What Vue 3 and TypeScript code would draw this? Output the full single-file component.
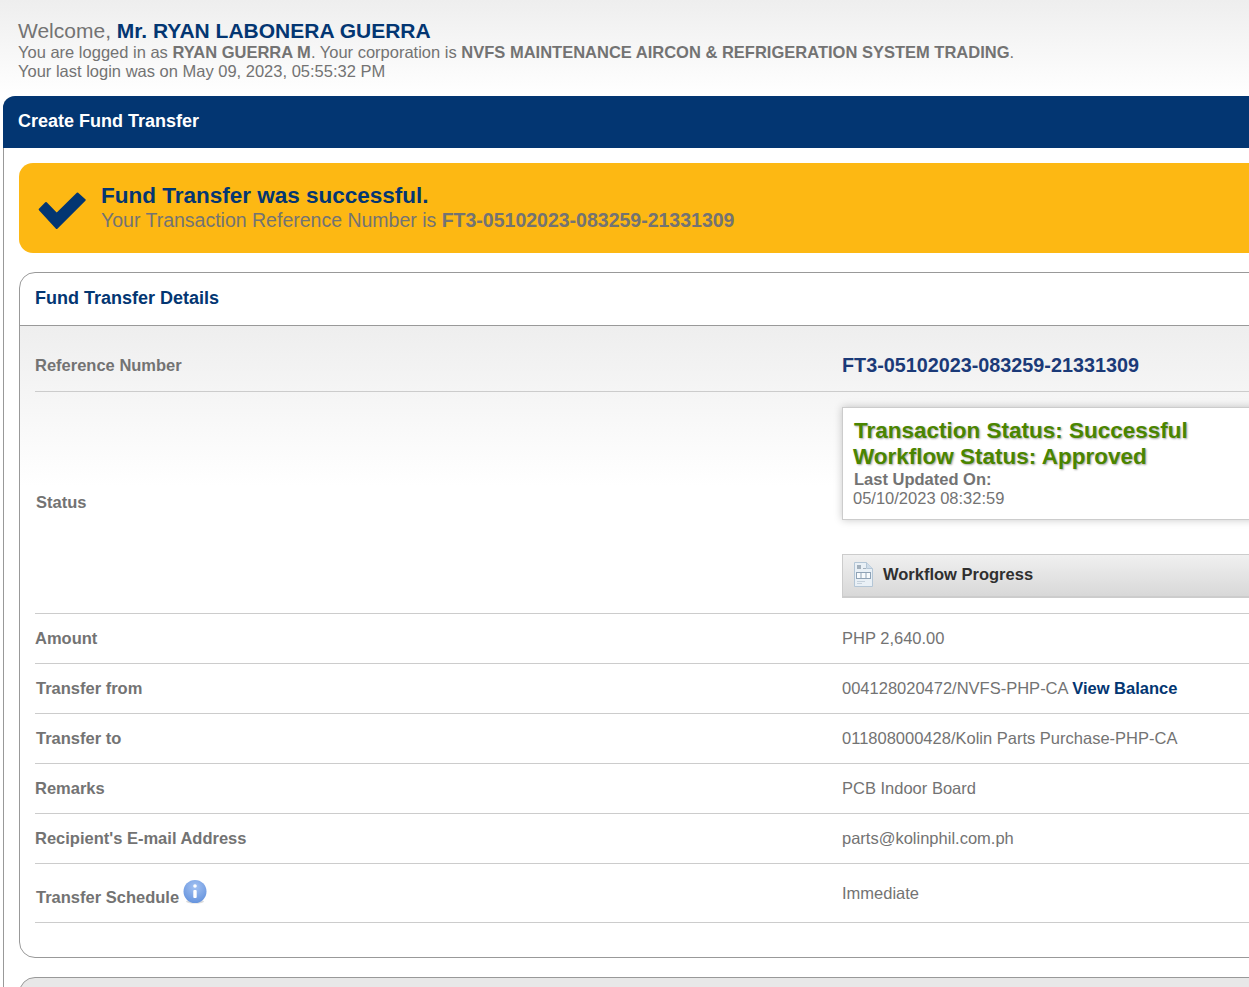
<script setup lang="ts">
interface IRow {
  label: string;
  value: string;
  link?: string;
  indent?: boolean;
}

const rows: IRow[] = [
  { label: "Amount", value: "PHP 2,640.00" },
  { label: "Transfer from", value: "004128020472/NVFS-PHP-CA", link: "View Balance", indent: true },
  { label: "Transfer to", value: "011808000428/Kolin Parts Purchase-PHP-CA", indent: true },
  { label: "Remarks", value: "PCB Indoor Board" },
  { label: "Recipient's E-mail Address", value: "parts@kolinphil.com.ph" },
];
</script>

<template>
  <div class="page">
    <header class="welcome">
      <div class="welcome__hello">Welcome, <b>Mr. RYAN LABONERA GUERRA</b></div>
      <div class="welcome__line">
        You are logged in as <b>RYAN GUERRA M</b>. Your corporation is
        <b>NVFS MAINTENANCE AIRCON &amp; REFRIGERATION SYSTEM TRADING</b>.
      </div>
      <div class="welcome__line">Your last login was on May 09, 2023, 05:55:32 PM</div>
    </header>

    <main class="panel">
      <h1 class="panel__title">Create Fund Transfer</h1>

      <div class="panel__body">
        <section class="banner">
          <svg class="banner__check" width="48" height="40" viewBox="0 0 48 40">
            <path
              d="M1.7 19.5 L18.7 38 L46.7 10 L39.5 3.5 L18.7 24 L8 13 Z"
              fill="#033672"
              stroke="#033672"
              stroke-width="2"
              stroke-linejoin="round"
            />
          </svg>
          <div class="banner__text">
            <div class="banner__title">Fund Transfer was successful.</div>
            <div class="banner__sub">
              Your Transaction Reference Number is <b>FT3-05102023-083259-21331309</b>
            </div>
          </div>
        </section>

        <section class="card">
          <h2 class="card__title">Fund Transfer Details</h2>
          <div class="card__body">
            <div class="row row--ref">
              <div class="row__label row__label--ref">Reference Number</div>
              <div class="row__ref">FT3-05102023-083259-21331309</div>
            </div>

            <div class="row row--status">
              <div class="row__label row__label--indent">Status</div>
              <div class="status">
                <div class="status__box">
                  <div class="status__big status__big--first">Transaction Status: Successful</div>
                  <div class="status__big">Workflow Status: Approved</div>
                  <div class="status__meta status__meta--first"><b>Last Updated On:</b></div>
                  <div class="status__meta">05/10/2023 08:32:59</div>
                </div>
                <div class="progress">
                  <svg width="19" height="25" viewBox="0 0 19 25">
                    <path d="M.5 .5 H12.5 L18.5 6.5 V24.5 H.5 Z" fill="#e9f0f6" stroke="#b4c6d6" />
                    <path d="M12.5 .5 V6.5 H18.5" fill="#cfdce8" stroke="#b4c6d6" />
                    <rect x="3" y="3" width="4" height="4" fill="#a3b0bc" />
                    <rect x="9" y="6" width="3" height="1" fill="#a3b0bc" />
                    <rect x="2.5" y="10.5" width="14" height="6" fill="#f7fafc" stroke="#8fa3b6" />
                    <path d="M7 11 V16 M12 11 V16" stroke="#8fa3b6" />
                    <path d="M3 19.5 H11 M3 21.5 H8" stroke="#c5d1dc" />
                  </svg>
                  <span>Workflow Progress</span>
                </div>
              </div>
            </div>

            <div v-for="row in rows" :key="row.label" class="row">
              <div class="row__label" :class="{ 'row__label--indent': row.indent }">{{ row.label }}</div>
              <div class="row__value">
                {{ row.value }} <a v-if="row.link" class="row__link">{{ row.link }}</a>
              </div>
            </div>

            <div class="row row--schedule">
              <div class="row__label row__label--indent schedule">
                <span>Transfer Schedule</span>
                <svg class="schedule__icon" width="24" height="24" viewBox="0 0 24 24">
                  <defs>
                    <radialGradient id="info" cx="50%" cy="30%" r="70%">
                      <stop offset="0" stop-color="#a4c2f2" />
                      <stop offset="1" stop-color="#6694de" />
                    </radialGradient>
                  </defs>
                  <ellipse cx="12" cy="21.5" rx="9" ry="2" fill="#dcdcdc" />
                  <circle cx="12" cy="11.5" r="11.5" fill="url(#info)" />
                  <circle cx="12" cy="6" r="1.8" fill="#fff" />
                  <rect x="10.3" y="10" width="3.4" height="8" rx="1" fill="#fff" />
                </svg>
              </div>
              <div class="row__value">Immediate</div>
            </div>
          </div>
        </section>

        <section class="card card--next" />
      </div>
    </main>
  </div>
</template>

<style>
html,
body {
  margin: 0;
  overflow: hidden;
  background: #fff;
}
</style>

<style scoped>
.page {
  width: 1249px;
  height: 987px;
  overflow: hidden;
  font-family: "Liberation Sans", Arial, sans-serif;
  font-size: 16.5px;
  color: #737373;
  background: linear-gradient(#eeeeee, #ffffff 96px);
}

.welcome {
  height: 96px;
  box-sizing: border-box;
  padding: 19px 0 0 18px;
  white-space: nowrap;
}

.welcome__hello {
  font-size: 21px;
  line-height: 24px;
}

.welcome__hello b {
  color: #033672;
}

.welcome__line {
  line-height: 19px;
}

.panel {
  width: 1400px;
  margin-left: 3px;
  box-sizing: border-box;
  border-left: 1px solid #999;
  background: #fff;
  border-top-left-radius: 12px;
}

.panel__title {
  margin: 0 0 0 -1px;
  height: 52px;
  padding-left: 15px;
  font-size: 18px;
  line-height: 50px;
  font-weight: bold;
  color: #fff;
  background: #033672;
  border-top-left-radius: 12px;
}

.panel__body {
  padding: 15px 0 0 15px;
}

.banner {
  display: flex;
  align-items: center;
  height: 90px;
  padding-left: 19px;
  border-radius: 14px;
  background: #fdb813;
}

.banner__check {
  margin-right: 15px;
  margin-top: 4px;
}

.banner__text {
  padding-bottom: 1px;
}

.banner__title {
  font-size: 22.5px;
  line-height: 25px;
  font-weight: bold;
  color: #033672;
}

.banner__sub {
  font-size: 19.5px;
  line-height: 24px;
}

.card {
  margin-top: 19px;
  border: 1px solid #999;
  border-radius: 16px 0 0 16px;
  height: 686px;
  box-sizing: border-box;
  overflow: hidden;
}

.card__title {
  margin: 0;
  height: 52px;
  padding-left: 15px;
  font-size: 18px;
  line-height: 50px;
  color: #033672;
  border-bottom: 1px solid #999;
}

.card__body {
  padding: 15px 0 0 15px;
  background: linear-gradient(#eeeeee, #ffffff 160px);
}

.card--next {
  height: 40px;
  margin-top: 19px;
  background: #e8e8e8;
}

.row {
  display: grid;
  grid-template-columns: 807px 1fr;
  align-items: center;
  height: 50px;
  box-sizing: border-box;
  border-bottom: 1px solid #ccc;
}

.row--ref {
  height: 51px;
}

.row--status {
  height: 222px;
}

.row--schedule {
  height: 59px;
}

.row__label {
  font-weight: bold;
}

.row__label--ref {
  padding-bottom: 2px;
}

.row__label--indent {
  padding-left: 1px;
}

.row__ref {
  font-size: 19.8px;
  font-weight: bold;
  color: #1b3a78;
  padding-bottom: 2px;
}

.row__link {
  font-weight: bold;
  color: #033672;
}

.status {
  padding-top: 15px;
  height: 206px;
}

.status__box {
  height: 113px;
  box-sizing: border-box;
  padding: 10px 10px 0;
  background: #fff;
  border: 1px solid #ccc;
  box-shadow: 0 0 8px rgba(0, 0, 0, 0.22);
}

.status__big {
  font-size: 22.5px;
  line-height: 26px;
  font-weight: bold;
  color: #4a8500;
  text-shadow: 1px 1px 2px rgba(0, 0, 0, 0.35);
}

.status__big--first {
  padding-left: 1px;
}

.status__meta {
  line-height: 18.5px;
}

.status__meta--first {
  padding-left: 1px;
}

.progress {
  display: flex;
  align-items: center;
  gap: 10px;
  height: 44px;
  margin-top: 34px;
  padding: 0 0 2px 11px;
  box-sizing: border-box;
  border: 1px solid #ccc;
  border-bottom-width: 2px;
  font-weight: bold;
  color: #2f2f2f;
  background: linear-gradient(#f0f0f0, #d8d8d8);
}

.schedule {
  display: flex;
  align-items: flex-end;
  gap: 4px;
}

.schedule span {
  line-height: 19px;
}

.schedule__icon {
  margin-bottom: 3px;
}
</style>
